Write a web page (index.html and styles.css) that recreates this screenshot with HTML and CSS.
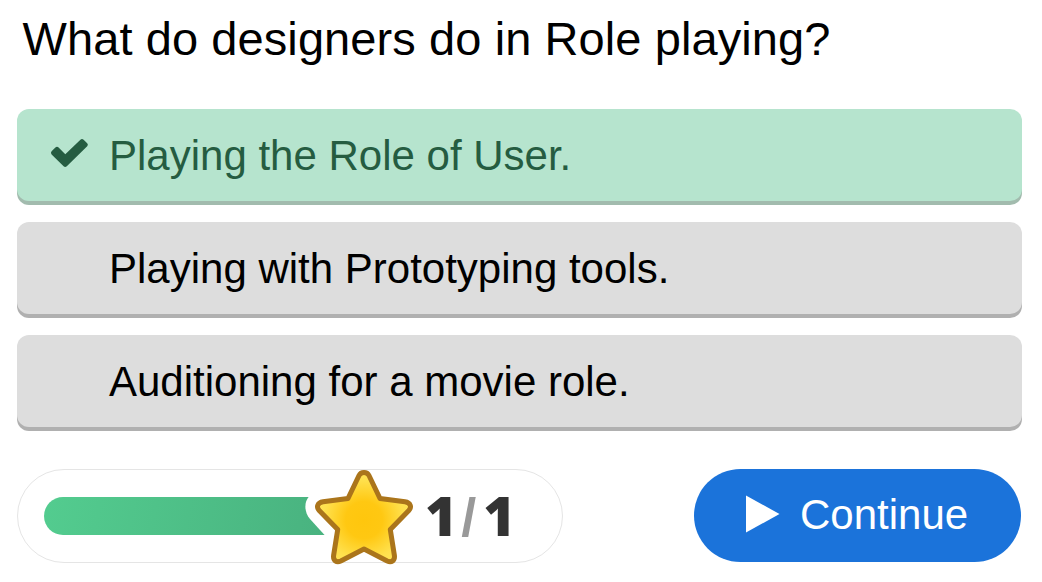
FILE: index.html
```
<!DOCTYPE html>
<html lang="en">
<head>
<meta charset="utf-8">
<title>Quiz</title>
<link rel="stylesheet" href="styles.css">
</head>
<body>
<main class="quiz">
  <h1 class="question"><span>What do designers do in Role playing?</span></h1>
  <ul class="answers">
    <li class="answer correct">
      <svg class="check" viewBox="50 137 40 32"><path d="M51.6 151.2 L55.4 147.5 Q57 146.2 58.6 147.5 L65.3 154.3 L80.4 139.7 Q82 138.2 83.6 139.7 L87.2 143.2 Q88.6 144.8 87.2 146.3 L66.8 166.2 Q65.2 167.6 63.6 166.2 L51.6 154.4 Q50.2 152.8 51.6 151.2Z"/></svg>
      <span>Playing the Role of User.</span>
    </li>
    <li class="answer"><span>Playing with Prototyping tools.</span></li>
    <li class="answer"><span>Auditioning for a movie role.</span></li>
  </ul>
  <div class="footer">
    <div class="score">
      <div class="bar"></div>
      <svg class="star" viewBox="304 464 114 106">
        <defs>
          <radialGradient id="gold" gradientUnits="userSpaceOnUse" cx="364" cy="520" r="44">
            <stop offset="0" stop-color="#ffc60d"/>
            <stop offset=".42" stop-color="#ffc812"/>
            <stop offset=".9" stop-color="#ffe04c"/>
            <stop offset="1" stop-color="#ffe252"/>
          </radialGradient>
        </defs>
        <path class="notch" d="M309 496.5 C304 502 304 512 310 519 L325 535.5 H366 V496.5Z"/>
        <path class="star-shape" d="M359 475.5 C361 471.5 367 471.5 369 475.5 L380 498.5 L405 501.7 C410.5 502.5 412 507 408.8 510.5 L390.3 529.6 L394.4 555.5 C395 560.5 391.5 563 387.2 561 L364 549 L340.8 561 C336.5 563 333 560.5 333.6 555.5 L337.7 529.6 L319.2 510.5 C316 507 317.5 502.5 323 501.7 L348 498.5Z"/>
      </svg>
      <div class="points"><b>1</b><i>/</i><b>1</b></div>
    </div>
    <button class="continue">
      <svg class="play" viewBox="0 0 34 38"><path d="M0 .5 L33.5 19 L0 37.5Z"/></svg>
      <span>Continue</span>
    </button>
  </div>
</main>
</body>
</html>
```
FILE: styles.css
```
* { box-sizing: border-box; }
body {
  margin: 0;
  background: #fff;
  color: #000;
  font-family: "Liberation Sans", Arial, sans-serif;
  overflow: hidden;
}
.quiz {
  width: 1042px;
  height: 582px;
  padding: 12px 20px 0 17px;
}
.question {
  margin: 0;
  padding-left: 5.5px;
  height: 97px;
  font-size: 47px;
  font-weight: 400;
  line-height: 54px;
  letter-spacing: .09px;
  white-space: nowrap;
}
.answers {
  display: flex;
  flex-direction: column;
  gap: 21px;
  margin: 0;
  padding: 0;
  list-style: none;
}
.answer {
  display: flex;
  align-items: center;
  position: relative;
  height: 92px;
  padding: 2px 0 0 92px;
  border-radius: 12px;
  background: #ddd;
  box-shadow: 0 4px 0 #b0b0b0;
  font-size: 42px;
  line-height: 48px;
  white-space: nowrap;
}
.correct {
  background: #b6e4ce;
  box-shadow: 0 4px 0 #a2bbae;
  color: #255c41;
}
.check {
  position: absolute;
  left: 33px;
  top: 28px;
  width: 40px;
  height: 32px;
  fill: #255c41;
}
.footer {
  display: flex;
  justify-content: space-between;
  margin: 42px 1px 0 0;
}
.score {
  display: flex;
  align-items: center;
  position: relative;
  width: 546px;
  height: 94px;
  padding-left: 26px;
  border: 1px solid #e5e5e5;
  border-radius: 47px;
}
.bar {
  width: 310px;
  height: 38px;
  border-radius: 19px 0 0 19px;
  background: linear-gradient(100deg, #53cc8f, #48b07e);
}
.star {
  position: absolute;
  left: 286px;
  top: -6px;
  width: 114px;
  height: 106px;
}
.notch { fill: #fff; }
.star-shape {
  fill: url(#gold);
  stroke: #ab751b;
  stroke-width: 5;
  stroke-linejoin: round;
}
.points {
  display: flex;
  align-items: baseline;
  margin-left: 71px;
  color: #333;
  font: 700 55px/64px "Open Sans", Arial, sans-serif;
}
.points i {
  margin: 0 7px 0 4px;
  color: #999;
  font-family: "Liberation Sans", Arial, sans-serif;
  font-size: 54px;
  font-style: normal;
}
.continue {
  display: flex;
  align-items: center;
  width: 327px;
  height: 93px;
  padding: 0 0 2px 52px;
  border: 0;
  border-radius: 47px;
  background: #1b73da;
  color: #fff;
  font: 42px/48px "Liberation Sans", Arial, sans-serif;
}
.play {
  width: 34px;
  height: 38px;
  margin: -2px 20px 0 0;
  fill: #fff;
}
```
